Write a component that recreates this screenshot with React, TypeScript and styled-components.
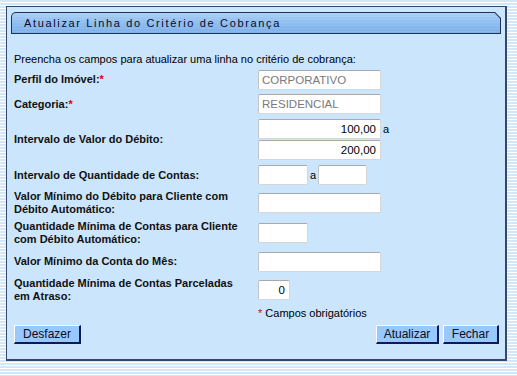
import React from "react";
import styled, { createGlobalStyle } from "styled-components";

const GlobalStyle = createGlobalStyle`
  html, body { margin: 0; padding: 0; }
  body {
    width: 517px;
    height: 376px;
    overflow: hidden;
    background: repeating-linear-gradient(to bottom, #d3e7f9 0px, #d3e7f9 2px, #ffffff 2px, #ffffff 3px);
    font-family: "Liberation Sans", Arial, sans-serif;
    color: #000;
  }
`;

const Page = styled.div`
  padding: 6px;
`;

const Panel = styled.div`
  box-sizing: border-box;
  width: 501px;
  height: 355px;
  background: #cbe5fc;
  border: 1px solid #34486a;
  border-right-width: 2px;
  border-bottom-width: 2px;
  padding: 5px 4px 0 4px;
`;

const TitleOuter = styled.div`
  box-sizing: border-box;
  height: 22px;
  padding: 1px;
  background: #1e3256;
  border-top-left-radius: 5px;
  clip-path: polygon(0 0, calc(100% - 6px) 0, 100% 6px, 100% 100%, 0 100%);
`;

const TitleInner = styled.div`
  box-sizing: border-box;
  height: 100%;
  display: flex;
  align-items: center;
  padding-left: 12px;
  border-top-left-radius: 4px;
  clip-path: polygon(0 0, calc(100% - 5.4px) 0, 100% 5.4px, 100% 100%, 0 100%);
  background:
    repeating-linear-gradient(to bottom, rgba(255,255,255,0.08) 0px, rgba(255,255,255,0.08) 1px, transparent 1px, transparent 3px),
    linear-gradient(to bottom, #a9cff6 0%, #8dbcf0 50%, #7eb0ea 100%);
  font-size: 11px;
  letter-spacing: 1.65px;
  color: #0a0a1e;
`;

const Content = styled.div`
  padding: 0 2px 0 3px;
`;

const Intro = styled.div`
  margin-top: 18px;
  font-size: 11px;
  line-height: 15px;
  height: 15px;
`;

const Row = styled.div<{ $h: number }>`
  display: grid;
  grid-template-columns: 244px 1fr;
  align-items: center;
  height: ${(p) => p.$h}px;
`;

const Label = styled.div`
  font-size: 11px;
  font-weight: bold;
  line-height: 13px;
  color: #111;
`;

const Req = styled.span`
  color: #e00000;
`;

const Field = styled.div`
  display: flex;
  align-items: center;
  gap: 2px;
`;

const Stack = styled.div`
  display: flex;
  flex-direction: column;
  gap: 1px;
`;

const Input = styled.input<{ $w: number; $right?: boolean; $muted?: boolean }>`
  box-sizing: border-box;
  width: ${(p) => p.$w}px;
  height: 20px;
  margin: 0;
  padding: 0 4px 0 3px;
  border: 1px solid #d6d6d6;
  border-top-color: #a9a9a9;
  border-left-color: #c4c4c4;
  border-radius: 2px;
  background: #fff;
  font-family: "Liberation Sans", Arial, sans-serif;
  font-size: 11.5px;
  color: ${(p) => (p.$muted ? "#7a7a7a" : "#000")};
  text-align: ${(p) => (p.$right ? "right" : "left")};
  outline: none;
`;

const Sep = styled.span`
  font-size: 11px;
  color: #000;
`;

const Note = styled.div`
  height: 19px;
  line-height: 19px;
  padding-left: 244px;
  font-size: 11px;
`;

const Buttons = styled.div`
  display: flex;
  justify-content: space-between;
  margin-top: 2px;
`;

const Group = styled.div`
  display: flex;
  gap: 4px;
`;

const Button = styled.button<{ $w: number }>`
  box-sizing: border-box;
  width: ${(p) => p.$w}px;
  height: 19px;
  padding: 0;
  margin: 0;
  background: #99c8fc;
  border: 1px solid #ffffff;
  border-right: 2px solid #0a1a5c;
  border-bottom: 2px solid #0a1a5c;
  font-family: "Liberation Sans", Arial, sans-serif;
  font-size: 12px;
  color: #0c0c24;
  line-height: 15px;
`;

export default function App() {
  return (
    <>
      <GlobalStyle />
      <Page>
        <Panel>
          <TitleOuter>
            <TitleInner>Atualizar Linha do Critério de Cobrança</TitleInner>
          </TitleOuter>
          <Content>
            <Intro>Preencha os campos para atualizar uma linha no critério de cobrança:</Intro>
            <Row $h={25}>
              <Label>
                Perfil do Imóvel:<Req>*</Req>
              </Label>
              <Field>
                <Input $w={123} $muted readOnly value="CORPORATIVO" />
              </Field>
            </Row>
            <Row $h={24}>
              <Label>
                Categoria:<Req>*</Req>
              </Label>
              <Field>
                <Input $w={123} $muted readOnly value="RESIDENCIAL" />
              </Field>
            </Row>
            <Row $h={46}>
              <Label>Intervalo de Valor do Débito:</Label>
              <Stack>
                <Field>
                  <Input $w={123} $right readOnly value="100,00" />
                  <Sep>a</Sep>
                </Field>
                <Field>
                  <Input $w={123} $right readOnly value="200,00" />
                </Field>
              </Stack>
            </Row>
            <Row $h={26}>
              <Label>Intervalo de Quantidade de Contas:</Label>
              <Field>
                <Input $w={50} readOnly value="" />
                <Sep>a</Sep>
                <Input $w={49} readOnly value="" />
              </Field>
            </Row>
            <Row $h={30}>
              <Label>
                Valor Mínimo do Débito para Cliente com
                <br />
                Débito Automático:
              </Label>
              <Field>
                <Input $w={123} readOnly value="" />
              </Field>
            </Row>
            <Row $h={29}>
              <Label>
                Quantidade Mínima de Contas para Cliente
                <br />
                com Débito Automático:
              </Label>
              <Field>
                <Input $w={50} readOnly value="" />
              </Field>
            </Row>
            <Row $h={29}>
              <Label>Valor Mínimo da Conta do Mês:</Label>
              <Field>
                <Input $w={123} readOnly value="" />
              </Field>
            </Row>
            <Row $h={28}>
              <Label>
                Quantidade Mínima de Contas Parceladas
                <br />
                em Atraso:
              </Label>
              <Field>
                <Input $w={32} $right readOnly value="0" />
              </Field>
            </Row>
            <Note>
              <Req>*</Req> Campos obrigatórios
            </Note>
            <Buttons>
              <Button $w={67}>Desfazer</Button>
              <Group>
                <Button $w={63}>Atualizar</Button>
                <Button $w={56}>Fechar</Button>
              </Group>
            </Buttons>
          </Content>
        </Panel>
      </Page>
    </>
  );
}
